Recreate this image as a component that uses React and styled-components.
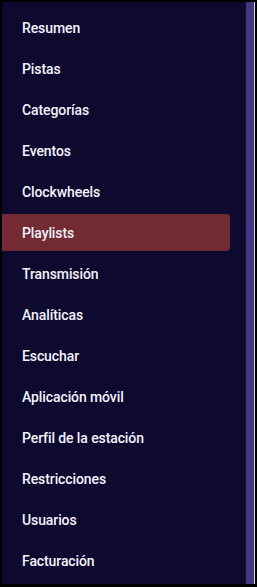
import React from 'react'
import styled, { createGlobalStyle } from 'styled-components'

const GlobalStyle = createGlobalStyle`
  html, body {
    margin: 0;
    padding: 0;
    background: #000;
  }
  * {
    box-sizing: border-box;
  }
`

const Frame = styled.div`
  width: 257px;
  height: 587px;
  display: flex;
  background: #000;
  padding: 2px 2px 3px 2px;
`

const Sidebar = styled.nav`
  flex: 1;
  display: flex;
  background: #0e092e;
  border-right: 1px solid #d9d6e8;
`

const Menu = styled.ul`
  flex: 1;
  list-style: none;
  margin: 0;
  padding: 7px 16px 0 0;
  display: flex;
  flex-direction: column;
  gap: 4px;
`

const Item = styled.li`
  height: 37px;
  display: flex;
  align-items: center;
  padding-left: 20px;
  border-radius: 0 4px 4px 0;
  background: ${({ $active }) => ($active ? '#722a33' : 'transparent')};
  color: #f4f2fa;
  font-family: Roboto, 'Liberation Sans', sans-serif;
  font-weight: 500;
  font-size: 14px;
  letter-spacing: -0.1px;
`

const Scroll = styled.div`
  width: 8px;
  background: #433780;
`

const links = [
  'Resumen',
  'Pistas',
  'Categorías',
  'Eventos',
  'Clockwheels',
  'Playlists',
  'Transmisión',
  'Analíticas',
  'Escuchar',
  'Aplicación móvil',
  'Perfil de la estación',
  'Restricciones',
  'Usuarios',
  'Facturación',
]

const App = () => {
  return (
    <>
      <GlobalStyle />
      <Frame>
        <Sidebar>
          <Menu>
            {links.map((name) => (
              <Item key={name} $active={name === 'Playlists'}>{name}</Item>
            ))}
          </Menu>
          <Scroll />
        </Sidebar>
      </Frame>
    </>
  )
}

export default App
